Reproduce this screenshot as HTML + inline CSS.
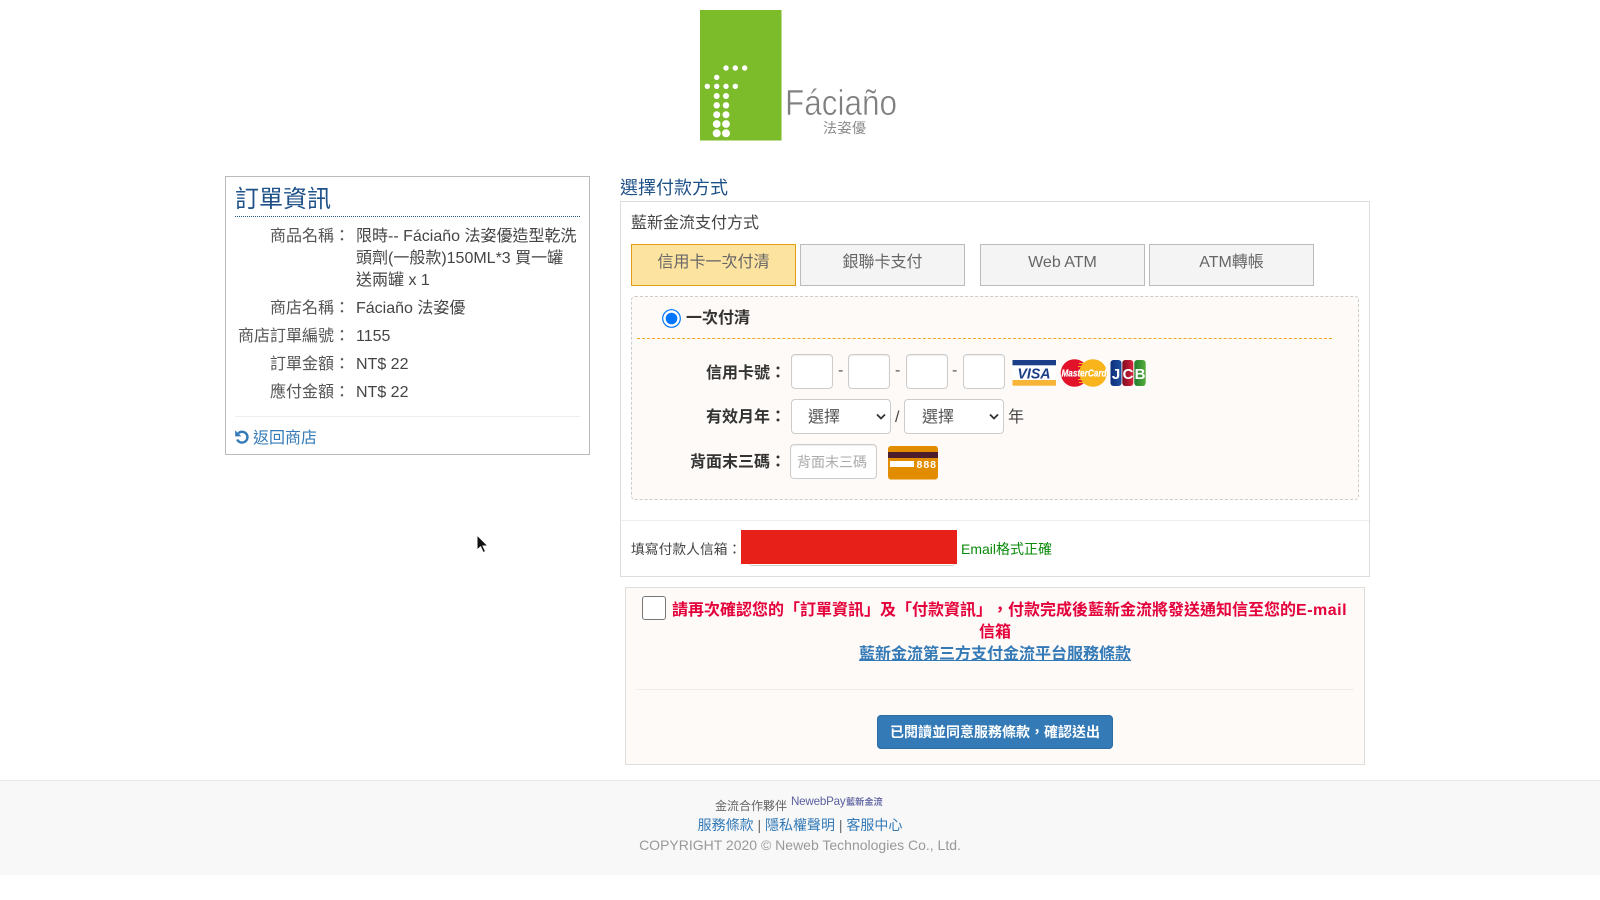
<!DOCTYPE html>
<html lang="zh-TW">
<head>
<meta charset="utf-8">
<title>選擇付款方式</title>
<style>
html,body{margin:0;padding:0;background:#fff;}
body{width:1600px;height:900px;position:relative;overflow:hidden;font-family:"Liberation Sans","Noto Sans CJK TC",sans-serif;font-size:16px;color:#333;}
.a{position:absolute;white-space:nowrap;}
.box{position:absolute;box-sizing:border-box;}
.t{position:absolute;white-space:nowrap;line-height:22px;height:22px;}
.r{text-align:right;}
.tab{position:absolute;box-sizing:border-box;top:244px;height:42px;width:165px;border:1px solid #bbb;background:#f4f4f4;color:#666;text-align:center;line-height:36px;font-size:16px;}
.tab.on{background:#fde3a0;border-color:#e49b1a;}
.in{position:absolute;box-sizing:border-box;background:#fff;border:1px solid #ccc;border-radius:4px;box-shadow:inset 0 1px 1px rgba(0,0,0,.075);}
.sel{position:absolute;box-sizing:border-box;background:#fff;border:1px solid #ccc;border-radius:4px;top:399px;height:35px;color:#555;line-height:35px;padding-left:16px;font-size:16px;}
.lb{position:absolute;white-space:nowrap;font-weight:bold;line-height:22px;text-align:right;width:120px;left:666px;color:#333;}
a{color:#337ab7;text-decoration:none;}
</style>
</head>
<body>

<!-- logo -->
<svg class="a" style="left:700px;top:10px" width="210" height="132" viewBox="700 10 210 132">
  <rect x="700" y="10" width="81.5" height="130.5" fill="#7cbb2a"/>
  <g fill="#fff">
    <circle cx="726" cy="68" r="2.7"/><circle cx="735.3" cy="68" r="2.7"/><circle cx="744.7" cy="68" r="2.7"/>
    <circle cx="716.7" cy="77.3" r="2.7"/>
    <circle cx="707.3" cy="86.3" r="2.7"/><circle cx="716.7" cy="86.3" r="2.7"/><circle cx="726" cy="86.3" r="2.7"/><circle cx="735.3" cy="86.3" r="2.7"/>
    <circle cx="716.7" cy="96" r="3"/><circle cx="726" cy="96" r="3"/>
    <circle cx="716.7" cy="105.3" r="3.2"/><circle cx="726" cy="105.3" r="3.2"/>
    <circle cx="716.7" cy="114.7" r="3.5"/><circle cx="726" cy="114.7" r="3.5"/>
    <circle cx="716.7" cy="124" r="3.9"/><circle cx="726" cy="124" r="3.9"/>
    <circle cx="716.7" cy="133.3" r="4"/><circle cx="726" cy="133.3" r="4"/>
  </g>
  <text x="785" y="115" font-family="Liberation Sans" font-size="36" fill="#808080" stroke="#fff" stroke-width=".55" textLength="112" lengthAdjust="spacingAndGlyphs">Fáciaño</text>
  <text x="823" y="133" font-family="Noto Sans CJK TC" font-size="14" fill="#8a8a8a" textLength="43">法姿優</text>
</svg>

<!-- order panel -->
<div class="box" style="left:225px;top:176px;width:365px;height:279px;border:1px solid #bbb;"></div>
<div class="t" style="left:235px;top:189px;font-size:24px;color:#1f5189;">訂單資訊</div>
<div class="a" style="left:235px;top:216px;width:345px;border-top:1px dotted #1f5189;"></div>

<div class="t r" style="left:200px;width:150px;top:226px;color:#555;">商品名稱：</div>
<div class="a" style="left:356px;top:226px;line-height:22px;color:#444;">限時-- Fáciaño 法姿優造型乾洗<br>頭劑(一般款)150ML*3 買一罐<br>送兩罐 x 1</div>
<div class="t r" style="left:200px;width:150px;top:298px;color:#555;">商店名稱：</div>
<div class="t" style="left:356px;top:298px;color:#444;">Fáciaño 法姿優</div>
<div class="t r" style="left:200px;width:150px;top:326px;color:#555;">商店訂單編號：</div>
<div class="t" style="left:356px;top:326px;color:#444;">1155</div>
<div class="t r" style="left:200px;width:150px;top:354px;color:#555;">訂單金額：</div>
<div class="t" style="left:356px;top:354px;color:#444;">NT$ 22</div>
<div class="t r" style="left:200px;width:150px;top:382px;color:#555;">應付金額：</div>
<div class="t" style="left:356px;top:382px;color:#444;">NT$ 22</div>
<div class="a" style="left:235px;top:416px;width:345px;border-top:1px solid #eee;"></div>
<svg class="a" style="left:234px;top:429px" width="16" height="16" viewBox="0 0 16 16"><path d="M4.4 4.2A5.4 5.4 0 1 1 3.2 10.5" fill="none" stroke="#337ab7" stroke-width="2.4"/><path d="M1.2 1.2V7.4H7.4Z" fill="#337ab7"/></svg>
<div class="t" style="left:253px;top:428px;"><a href="#">返回商店</a></div>

<!-- payment -->
<div class="t" style="left:620px;top:177px;font-size:18px;color:#1f5189;">選擇付款方式</div>
<div class="box" style="left:620px;top:201px;width:750px;height:376px;border:1px solid #ddd;"></div>
<div class="t" style="left:631px;top:213px;color:#444;">藍新金流支付方式</div>

<div class="tab on" style="left:631px;">信用卡一次付清</div>
<div class="tab" style="left:800px;">銀聯卡支付</div>
<div class="tab" style="left:980px;">Web ATM</div>
<div class="tab" style="left:1149px;">ATM轉帳</div>

<div class="box" style="left:631px;top:296px;width:728px;height:204px;background:#fefaf7;border:1px dashed #ccc;border-radius:4px;"></div>
<svg class="a" style="left:661px;top:308px" width="21" height="21" viewBox="0 0 21 21"><circle cx="10.5" cy="10.5" r="8.8" fill="#fff" stroke="#0075ff" stroke-width="1.2"/><circle cx="10.5" cy="10.5" r="5.8" fill="#0075ff"/></svg>
<div class="t" style="left:686px;top:308px;font-weight:bold;">一次付清</div>
<div class="a" style="left:637px;top:338px;width:695px;border-top:1px dashed #f5a623;"></div>

<div class="lb" style="top:363px;">信用卡號：</div>
<div class="in" style="left:791px;top:354px;width:42px;height:35px;"></div>
<div class="t" style="left:838px;top:360px;color:#555;">-</div>
<div class="in" style="left:848px;top:354px;width:42px;height:35px;"></div>
<div class="t" style="left:895px;top:360px;color:#555;">-</div>
<div class="in" style="left:906px;top:354px;width:42px;height:35px;"></div>
<div class="t" style="left:952px;top:360px;color:#555;">-</div>
<div class="in" style="left:963px;top:354px;width:42px;height:35px;"></div>

<!-- card logos -->
<svg class="a" style="left:1010px;top:357px" width="140" height="32" viewBox="1010 357 140 32">
  <defs>
    <linearGradient id="jb" x1="0" x2="1" y1="0" y2="0"><stop offset="0" stop-color="#0f2f7a"/><stop offset="1" stop-color="#1c4fa0"/></linearGradient>
    <linearGradient id="jr" x1="0" x2="1" y1="0" y2="0"><stop offset="0" stop-color="#7d0d20"/><stop offset="1" stop-color="#d8223c"/></linearGradient>
    <linearGradient id="jg" x1="0" x2="1" y1="0" y2="0"><stop offset="0" stop-color="#1e7d2c"/><stop offset="1" stop-color="#58ad3d"/></linearGradient>
  </defs>
  <rect x="1012.5" y="360" width="43.5" height="26" fill="#fff"/>
  <rect x="1012.5" y="360" width="43.5" height="5.3" fill="#1a3e87"/>
  <rect x="1012.5" y="380" width="43.5" height="5.7" fill="#f7b538"/>
  <text x="1034" y="378.5" text-anchor="middle" font-family="Liberation Sans" font-size="15" font-weight="bold" font-style="italic" fill="#1a3e87" textLength="33" lengthAdjust="spacingAndGlyphs">VISA</text>
  <circle cx="1074.5" cy="373" r="13.8" fill="#e2122b"/>
  <circle cx="1093" cy="373" r="13.8" fill="#f9b41c"/>
  <g stroke="#f9b41c" stroke-width="1"><path d="M1079 363.5h6M1078 366.5h6M1078 379.5h6M1079 382.5h6"/></g>
  <text x="1084" y="376.5" text-anchor="middle" font-family="Liberation Sans" font-size="10.5" font-weight="bold" font-style="italic" fill="#fff" stroke="#fff" stroke-width=".2" textLength="45" lengthAdjust="spacingAndGlyphs">MasterCard</text>
  <rect x="1110.5" y="360" width="11" height="26" rx="3" fill="url(#jb)"/>
  <rect x="1122.3" y="360" width="11" height="26" rx="3" fill="url(#jr)"/>
  <rect x="1134.3" y="360" width="11.4" height="26" rx="3" fill="url(#jg)"/>
  <g font-family="Liberation Sans" font-size="15" font-weight="bold" fill="#fff" text-anchor="middle">
    <text x="1116" y="379">J</text><text x="1128" y="379">C</text><text x="1140" y="379">B</text>
  </g>
</svg>

<div class="lb" style="top:407px;">有效月年：</div>
<div class="sel" style="left:791px;width:100px;">選擇</div>
<svg class="a" style="left:875px;top:412px" width="12" height="10" viewBox="0 0 12 10"><path d="M2 2.5L6 6.5L10 2.5" fill="none" stroke="#333" stroke-width="1.8"/></svg>
<div class="t" style="left:895px;top:407px;color:#444;">/</div>
<div class="sel" style="left:904px;width:100px;padding-left:17px;">選擇</div>
<svg class="a" style="left:988px;top:412px" width="12" height="10" viewBox="0 0 12 10"><path d="M2 2.5L6 6.5L10 2.5" fill="none" stroke="#333" stroke-width="1.8"/></svg>
<div class="t" style="left:1008px;top:407px;color:#444;">年</div>

<div class="lb" style="top:452px;">背面末三碼：</div>
<div class="in" style="left:790px;top:444px;width:87px;height:35px;color:#aaa;font-size:14px;line-height:35px;padding-left:6px;white-space:nowrap;">背面末三碼</div>
<svg class="a" style="left:888px;top:446px" width="50" height="34" viewBox="0 0 50 34">
  <rect width="50" height="33.5" rx="3" fill="#e28c00"/>
  <rect y="6" width="50" height="6" fill="#4a1e2c"/>
  <rect x="2" y="15" width="24" height="6" fill="#fff"/>
  <text x="28.5" y="22" font-family="Liberation Sans" font-size="10.5" font-weight="bold" fill="#fff" textLength="19.5">888</text>
</svg>

<div class="a" style="left:621px;top:520px;width:748px;border-top:1px solid #eee;"></div>
<div class="t" style="left:631px;top:539px;font-size:13.8px;color:#444;">填寫付款人信箱：</div>
<div class="box" style="left:748px;top:560px;width:208px;height:6px;background:#fff;border-bottom:1px solid #ccc;border-radius:0 0 4px 4px;"></div>
<div class="box" style="left:741px;top:530px;width:216px;height:34px;background:#e8201a;"></div>
<div class="t" style="left:961px;top:538px;font-size:14px;color:#0a8a0a;">Email格式正確</div>

<!-- confirm -->
<div class="box" style="left:625px;top:587px;width:740px;height:178px;background:#fefaf7;border:1px solid #ddd;"></div>
<div class="box" style="left:642px;top:596px;width:24px;height:24px;background:#fff;border:1px solid #767676;border-radius:3px;"></div>
<div class="t" style="left:672px;top:600px;font-weight:bold;color:#e4003a;">請再次確認您的「訂單資訊」及「付款資訊」<span style="padding-left:8px;">，</span>付款完成後藍新金流將發送通知信至您的<span style="letter-spacing:.5px;">E-mail</span></div>
<div class="t" style="left:625px;width:740px;text-align:center;top:622px;font-weight:bold;color:#e4003a;">信箱</div>
<div class="t" style="left:625px;width:740px;text-align:center;top:644px;font-weight:bold;"><a href="#" style="text-decoration:underline;">藍新金流第三方支付金流平台服務條款</a></div>
<div class="a" style="left:636px;top:689px;width:718px;border-top:1px solid #eee;"></div>
<div class="box" style="left:877px;top:715px;width:236px;height:34px;background:#337ab7;border:1px solid #2e6da4;border-radius:4px;color:#fff;font-size:14px;font-weight:bold;text-align:center;line-height:32px;">已閱讀並同意服務條款，確認送出</div>

<!-- footer -->
<div class="box" style="left:0;top:780px;width:1600px;height:95px;background:#f8f8f8;border-top:1px solid #e7e7e7;"></div>
<div class="t" style="left:715px;top:795px;font-size:12px;color:#666;">金流合作夥伴</div>
<div class="t" style="left:791px;top:791px;font-size:11.6px;color:#5a5f9e;letter-spacing:-.2px;">NewebPay</div>
<div class="t" style="left:846px;top:791px;font-size:9.2px;font-weight:bold;color:#6a6fa8;">藍新金流</div>
<div class="t" style="left:0;width:1600px;text-align:center;top:814px;font-size:14px;color:#666;"><a href="#">服務條款</a> | <a href="#">隱私權聲明</a> | <a href="#">客服中心</a></div>
<div class="t" style="left:0;width:1600px;text-align:center;top:834px;font-size:14px;color:#999;">COPYRIGHT 2020 © Neweb Technologies Co., Ltd.</div>

<!-- cursor -->
<svg class="a" style="left:476px;top:534px" width="14" height="21" viewBox="0 0 14 21"><path d="M1 1V16L4.6 12.8L7.2 18.6L9.6 17.5L7 12H12Z" fill="#111" stroke="#fff" stroke-width="1"/></svg>

</body>
</html>
